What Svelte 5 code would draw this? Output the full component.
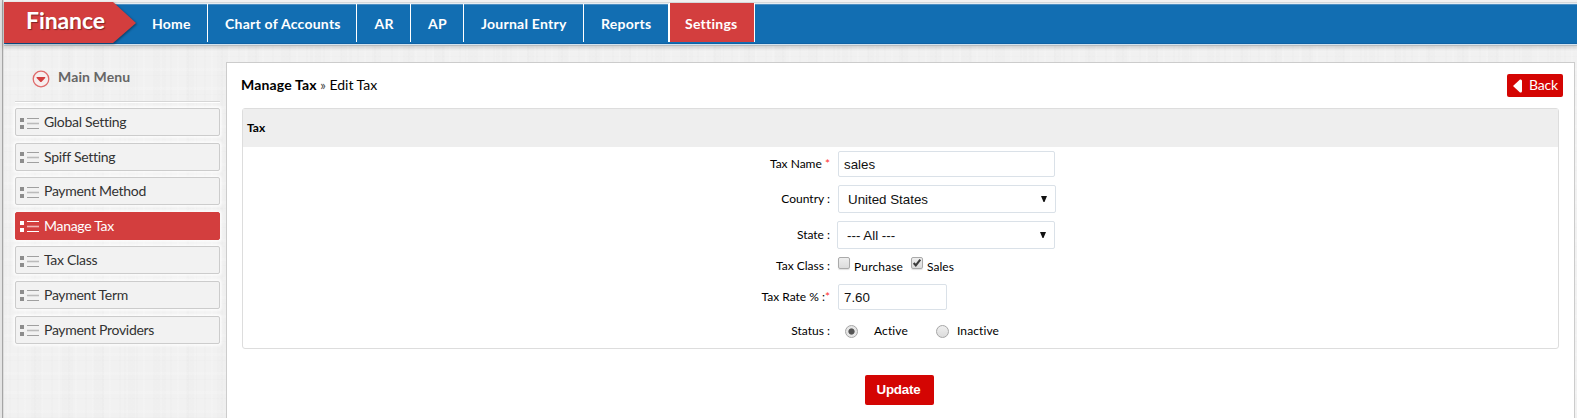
<script>
  const tabs = [
    { label: 'Home', width: 72, pad: 16 },
    { label: 'Chart of Accounts', width: 149, pad: 17 },
    { label: 'AR', width: 54, pad: 17.5 },
    { label: 'AP', width: 53, pad: 17 },
    { label: 'Journal Entry', width: 120, pad: 17 },
    { label: 'Reports', width: 85, pad: 17 },
    { label: 'Settings', width: 86, pad: 15, active: true }
  ];
  const menu = ['Global Setting', 'Spiff Setting', 'Payment Method', 'Manage Tax', 'Tax Class', 'Payment Term', 'Payment Providers'];
  const current = 'Manage Tax';
  let taxName = $state('sales');
  let taxRate = $state('7.60');
  let purchase = $state(false);
  let sales = $state(true);
  let status = $state('active');
</script>

<div class="page">
  <header>
    <div class="brand">
      <svg width="140" height="44" viewBox="0 0 140 44" aria-hidden="true">
        <path d="M0 0H109L132 21L109 41H0Z" fill="#d33e3e" />
      </svg>
      <span>Finance</span>
    </div>
    <nav>
      {#each tabs as tab}
        <a href="#top" class:active={tab.active} style="width:{tab.width}px;padding-left:{tab.pad}px">{tab.label}</a>
      {/each}
    </nav>
  </header>

  <div class="body">
    <aside>
      <h2>
        <svg width="18" height="18" viewBox="0 0 18 18" aria-hidden="true">
          <circle cx="9" cy="9" r="7.8" fill="#f7eeee" stroke="#df6b6b" stroke-width="1.3" />
          <path d="M4.6 7H13.2V8L9.4 12H8.4L4.6 8Z" fill="#d33e3e" />
        </svg>
        <span>Main Menu</span>
      </h2>
      <ul>
        {#each menu as item}
          <li class:active={item === current}>
            <svg width="19" height="13" viewBox="0 0 19 13" aria-hidden="true">
              <path class="sq" d="M0 1H4V5H0ZM0 8H4V12H0Z" />
              <path class="ln" d="M7 1.5H19M7 11.5H19" />
              <path class="mid" d="M7 6.5H19" />
            </svg>
            <span>{item}</span>
          </li>
        {/each}
      </ul>
    </aside>

    <main>
      <div class="top">
        <div class="crumb"><b>Manage Tax</b> <span>»</span> Edit Tax</div>
        <button class="back">
          <svg width="9" height="14" viewBox="0 0 9 14" aria-hidden="true"><path d="M0 7L7 .5Q9 0 9 2V12Q9 14 7 13.5Z" fill="#fff" /></svg>
          <span>Back</span>
        </button>
      </div>

      <section>
        <h3>Tax</h3>
        <div class="row name">
          <label for="name">Tax Name <i>*</i></label>
          <input id="name" type="text" bind:value={taxName} />
        </div>
        <div class="row country">
          <label for="country">Country :</label>
          <div class="select">
            <select id="country"><option>United States</option></select>
            <svg width="6" height="6" viewBox="0 0 6 6" aria-hidden="true"><path d="M0 0H6L3.5 6H2.5Z" fill="#111" /></svg>
          </div>
        </div>
        <div class="row state">
          <label for="state">State :</label>
          <div class="select">
            <select id="state"><option>--- All ---</option></select>
            <svg width="6" height="6" viewBox="0 0 6 6" aria-hidden="true"><path d="M0 0H6L3.5 6H2.5Z" fill="#111" /></svg>
          </div>
        </div>
        <div class="row class">
          <span class="label">Tax Class :</span>
          <label class="check">
            <input type="checkbox" bind:checked={purchase} /><span>Purchase</span>
          </label>
          <label class="check second">
            <span class="box">
              <input type="checkbox" bind:checked={sales} />
              {#if sales}
                <svg class="tick" width="12" height="12" viewBox="0 0 12 12" aria-hidden="true"><path d="M2.7 6L4.8 8.4L9.3 2.6" fill="none" stroke="#3c3c3c" stroke-width="2.1" /></svg>
              {/if}
            </span><span>Sales</span>
          </label>
        </div>
        <div class="row rate">
          <label for="rate">Tax Rate % :<i>*</i></label>
          <input id="rate" type="text" bind:value={taxRate} />
        </div>
        <div class="row status">
          <span class="label">Status :</span>
          <label class="radio active"><input type="radio" value="active" bind:group={status} /><span>Active</span></label>
          <label class="radio inactive"><input type="radio" value="inactive" bind:group={status} /><span>Inactive</span></label>
        </div>
      </section>

      <button class="update">Update</button>
    </main>
  </div>
</div>

<style>
  :global(body) { margin: 0; }
  .page, .page * { box-sizing: border-box; }
  .page {
    display: flex;
    flex-direction: column;
    height: 418px;
    overflow: hidden;
    padding-left: 4px;
    font-family: Lato, sans-serif;
    color: #222;
    background:
      linear-gradient(90deg, #e4e4e4 0 2px, #a5a5a5 2px 3px, #dedede 3px 4px, transparent 4px),
      repeating-linear-gradient(90deg, rgba(0,0,0,.006) 0 2px, transparent 2px 7px, rgba(255,255,255,.12) 7px 9px, transparent 9px 17px),
      repeating-linear-gradient(0deg, rgba(0,0,0,.006) 0 1px, transparent 1px 5px, rgba(255,255,255,.12) 5px 8px, transparent 8px 19px),
      repeating-linear-gradient(90deg, rgba(0,0,0,.006) 0 11px, transparent 11px 31px),
      #f1f1f1;
  }
  header {
    display: flex;
    flex: none;
    height: 44px;
    padding-top: 2px;
    background: linear-gradient(#f1f1f1 0 2px, #d5d8da 2px 3px, #e6edf2 3px 4px, #4f8fc2 4px 5px, #126eb2 5px 43px, #0f62a5 43px);
    box-shadow: 0 1px #d3e3ef, 0 2px #b9bdc0, 0 3px 4px 1px rgba(0,0,0,.14);
  }
  .brand { display: grid; width: 132px; height: 42px; }
  .brand svg, .brand span { grid-area: 1 / 1; }
  .brand svg { filter: drop-shadow(1px 1px 1px rgba(0,0,0,.4)); }
  .brand span {
    z-index: 1;
    padding-left: 22px;
    font-size: 23px;
    font-weight: 700;
    line-height: 37px;
    letter-spacing: -.1px;
    color: #fff;
    text-shadow: 1px 1px 1px rgba(0,0,0,.4);
  }
  nav { display: flex; height: 40px; }
  nav a {
    margin-top: 2px;
    border-right: 1px solid #fff;
    color: #fff;
    font-size: 14px;
    font-weight: 700;
    letter-spacing: .25px;
    line-height: 40px;
    height: 38px;
    text-decoration: none;
    white-space: nowrap;
  }
  nav a.active { background: #d33e3e; margin-top: 1px; height: 39px; line-height: 42px; border-left: 1px solid #fff; }
  .body { display: flex; flex: 1; }
  aside { width: 222px; padding: 23px 6px 0 11px; }
  h2 {
    display: flex;
    align-items: center;
    gap: 8px;
    height: 35px;
    margin: 0 0 6px;
    padding: 0 0 12px 17px;
    font-size: 14px;
    line-height: 18px;
    letter-spacing: .12px;
    color: #666;
    border-bottom: 1px solid #d6d6d6;
    box-shadow: 0 1px #fff;
  }
  h2 svg { margin-top: 2px; }
  h2 span { margin-bottom: 2px; }
  ul { display: flex; flex-direction: column; gap: 6.6px; margin: 0; padding: 0; list-style: none; }
  li {
    display: flex;
    align-items: center;
    gap: 5px;
    height: 28px;
    padding-left: 4px;
    border: 1px solid #ccc;
    border-radius: 2px;
    background: #f2f2f2;
    box-shadow: 0 0 3px 2px rgba(255,255,255,.75);
    font-size: 14px;
    letter-spacing: -.3px;
    color: #333;
  }
  li svg { margin-top: 2px; }
  li span { margin-bottom: 1px; }
  .sq { fill: #8d8d8d; }
  .ln { stroke: #a0a0a0; }
  .mid { stroke: #bbb; stroke-width: 1.6; }
  li.active { background: #d33e3e; border-color: #d33e3e; color: #fff; }
  .active .sq { fill: #fff; }
  .active .ln { stroke: #fff; }
  .active .mid { stroke: #f0b6b6; }
  main {
    display: flex;
    flex-direction: column;
    width: 1349px;
    margin-top: 18px;
    padding: 0 15px;
    border: 1px solid #ccc;
    border-bottom: 0;
    background: #fff;
  }
  .top { display: flex; justify-content: space-between; height: 45px; }
  .crumb { margin-left: -1px; padding-top: 13px; font-size: 14px; line-height: 18px; color: #000; }
  .crumb b { letter-spacing: .15px; }
  .crumb span { font-size: 13px; color: #444; }
  button { border: 0; border-radius: 2px; background: #d40503; color: #fff; }
  .back {
    display: flex;
    align-items: center;
    gap: 7px;
    width: 56px;
    height: 23px;
    margin: 11px -4px 0 0;
    padding: 0 0 0 6px;
    font: 14px Lato, sans-serif;
    letter-spacing: -.2px;
  }
  .back span { margin-bottom: 2px; }
  section { height: 241px; border: 1px solid #ddd; border-radius: 3px; font-size: 12px; color: #000; width: 1317px; }
  h3 { height: 38px; margin: 0; padding-left: 4px; background: #eee; font-size: 12px; line-height: 38px; }
  .row { display: flex; align-items: center; }
  .row > label:first-child, .label { width: 587px; margin: 0 8px 1px 0; text-align: right; flex: none; }
  i { color: #f33; font-style: normal; font-size: 12px; line-height: 1px; }
  .row input[type='text'], select {
    height: 26px;
    padding: 0 5px;
    border: 1px solid #dae1e8;
    border-radius: 2px;
    background: #fff;
    font: 13.33px 'Liberation Sans', Arial, sans-serif;
    color: #111;
  }
  .name { height: 26px; margin-top: 4px; }
  .name input { width: 217px; }
  .select { display: grid; align-items: center; width: 218px; }
  .select select, .select svg { grid-area: 1 / 1; }
  .select svg { justify-self: end; margin: 0 9px 1px 0; }
  .row select { width: 100%; height: 28px; appearance: none; padding: 0 9px; }
  .country { height: 28px; margin-top: 8px; }
  .state { height: 28px; margin-top: 8px; }
  .state .select { margin-left: -1px; }
  .class { height: 20px; margin-top: 7px; }
  .check { display: flex; align-items: flex-start; gap: 4px; height: 18px; }
  .check > span:last-child { line-height: 20px; }
  .check:not(.second) > span { letter-spacing: .15px; }
  .check.second { gap: 4px; margin-left: 8px; }
  .box { display: grid; }
  .box > * { grid-area: 1 / 1; }
  .tick { z-index: 1; pointer-events: none; }
  input[type='checkbox'] {
    appearance: none;
    width: 12px;
    height: 12px;
    margin: 0;
    border: 1px solid #aaa;
    border-radius: 2px;
    background: linear-gradient(#eee, #dcdcdc);
    box-shadow: 0 1px 1px rgba(0,0,0,.12);
  }
  .rate { height: 26px; margin-top: 8px; }
  .rate input { width: 109px; }
  .status { height: 20px; margin-top: 11px; }
  .radio { display: flex; align-items: center; }
  .radio span { margin-bottom: 1px; letter-spacing: .1px; }
  input[type='radio'] {
    appearance: none;
    width: 13px;
    height: 13px;
    margin: 0;
    border: 1px solid #a6a6a6;
    border-radius: 50%;
    background: linear-gradient(#efefef, #dcdcdc);
  }
  input[type='radio']:checked { background: radial-gradient(circle, #555 0 2.7px, #e6e6e6 3.5px); }
  .radio.active { margin-left: 7px; gap: 16px; width: 91px; }
  .radio.inactive { gap: 8px; }
  .update {
    width: 69px;
    height: 30px;
    margin: 26px 0 0 623px;
    padding: 0 2px 1px 0;
    font: bold 13.33px 'Liberation Sans', Arial, sans-serif;
    letter-spacing: -.2px;
  }
</style>
